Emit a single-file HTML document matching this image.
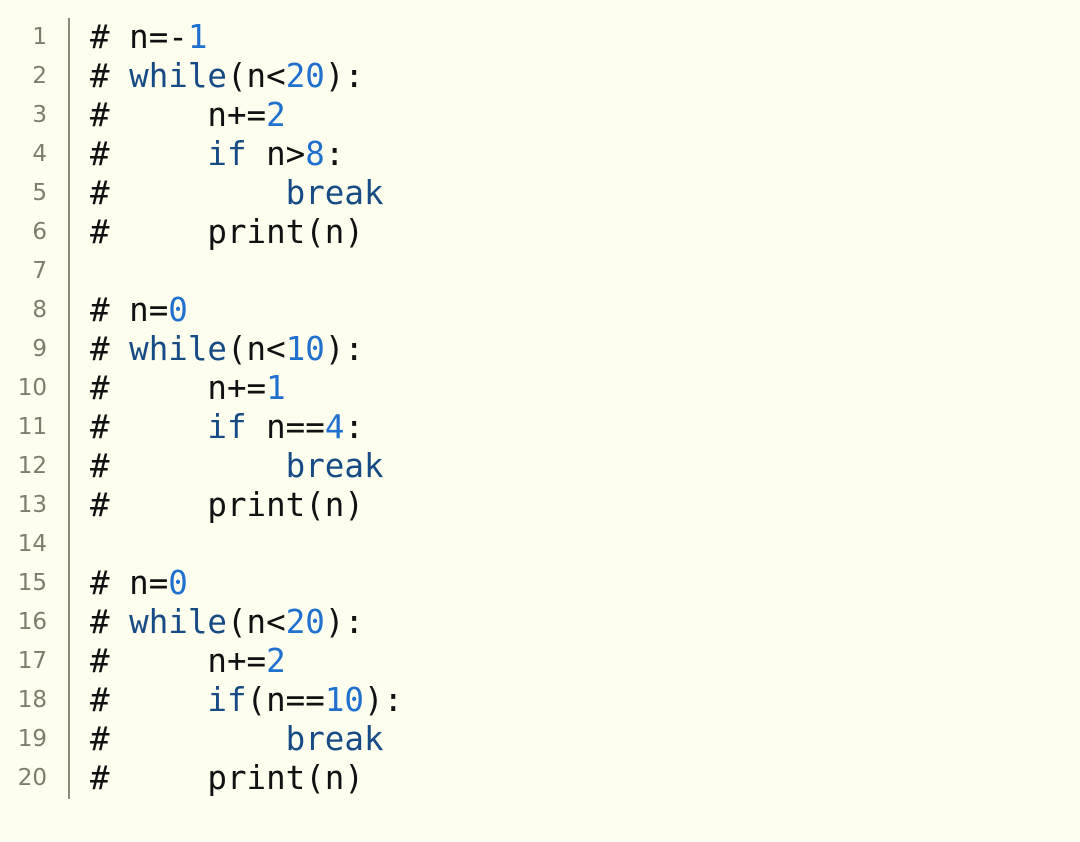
<!DOCTYPE html><html><head><style>
body{margin:0;width:1080px;height:842px;background:#fefeee;overflow:hidden}
.g{position:absolute;left:68px;top:18px;width:2px;height:781px;background:#8a8a78}
.n{position:absolute;left:0;top:18px;width:47px;text-align:right;font:23px/39px "DejaVu Sans","Liberation Sans",sans-serif;color:#7d7d6c}
.c{position:absolute;left:90px;top:18px;font:32.5px/39px "DejaVu Sans Mono","Liberation Mono",monospace;color:#111;white-space:pre}
.k{color:#174b86}.d{color:#1f70cf}
</style></head><body>
<div class="g"></div>
<div class="n">1<br>2<br>3<br>4<br>5<br>6<br>7<br>8<br>9<br>10<br>11<br>12<br>13<br>14<br>15<br>16<br>17<br>18<br>19<br>20</div>
<div class="c"># n=-<span class="d">1</span>
# <span class="k">while</span>(n&lt;<span class="d">20</span>):
#     n+=<span class="d">2</span>
#     <span class="k">if</span> n&gt;<span class="d">8</span>:
#         <span class="k">break</span>
#     print(n)

# n=<span class="d">0</span>
# <span class="k">while</span>(n&lt;<span class="d">10</span>):
#     n+=<span class="d">1</span>
#     <span class="k">if</span> n==<span class="d">4</span>:
#         <span class="k">break</span>
#     print(n)

# n=<span class="d">0</span>
# <span class="k">while</span>(n&lt;<span class="d">20</span>):
#     n+=<span class="d">2</span>
#     <span class="k">if</span>(n==<span class="d">10</span>):
#         <span class="k">break</span>
#     print(n)</div>
</body></html>
